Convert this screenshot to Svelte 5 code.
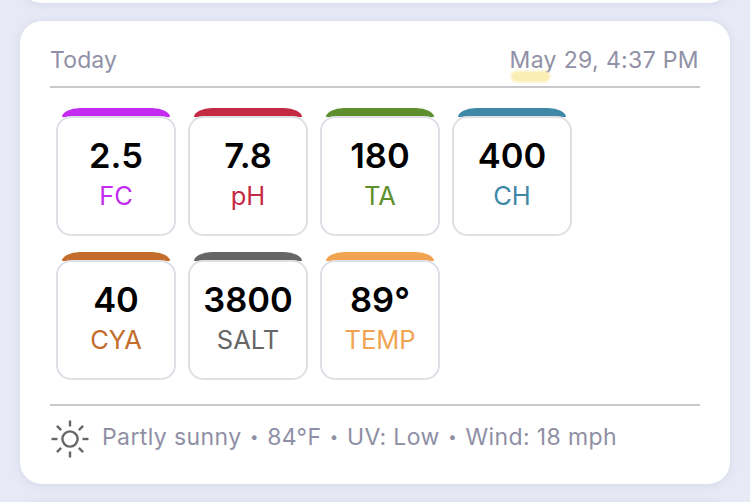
<script>
  const readings = [
    { value: '2.5', label: 'FC', color: '#c42bf0' },
    { value: '7.8', label: 'pH', color: '#c52a45' },
    { value: '180', label: 'TA', color: '#5e8f2d' },
    { value: '400', label: 'CH', color: '#3f88a8' },
    { value: '40', label: 'CYA', color: '#c46c2b' },
    { value: '3800', label: 'SALT', color: '#666666' },
    { value: '89°', label: 'TEMP', color: '#f0a452' }
  ];

  const conditions = ['Partly sunny', '84°F', 'UV: Low', 'Wind: 18 mph'];
  const rays = [0, 45, 90, 135, 180, 225, 270, 315];
</script>

<div class="page">
  <div class="card prev"></div>

  <section class="card today">
    <header class="head">
      <span class="title">Today</span>
      <span class="date"><span class="mark"></span>May 29, 4:37 PM</span>
    </header>

    <div class="tiles">
      {#each readings as r}
        <div class="tile">
          <div class="cap" style="background: {r.color}"></div>
          <div class="body">
            <div class="value">{r.value}</div>
            <div class="label" style="color: {r.color}">{r.label}</div>
          </div>
        </div>
      {/each}
    </div>

    <footer class="foot">
      <svg class="sun" viewBox="0 0 40 40" width="40" height="40" aria-hidden="true">
        <circle cx="20" cy="20" r="7.6" />
        {#each rays as a}
          <line x1="20" y1="1.5" x2="20" y2="7.5" transform="rotate({a} 20 20)" />
        {/each}
      </svg>
      <span class="conditions">
        {#each conditions as c, i}
          {#if i > 0}<span class="dot">•</span>{/if}<span>{c}</span>
        {/each}
      </span>
    </footer>
  </section>

  <div class="card next"></div>
</div>

<style>
  :global(body) {
    margin: 0;
    background: #e7e9f5;
    overflow: hidden;
  }

  .page {
    width: 750px;
    height: 502px;
    overflow: hidden;
    padding: 0 20px;
    box-sizing: border-box;
    font-family: Inter, "Liberation Sans", sans-serif;
  }

  .card {
    background: #fff;
    border-radius: 22px;
    box-shadow: 0 1px 8px rgba(150, 155, 190, 0.22);
  }

  .prev {
    height: 43px;
    margin-top: -40px;
  }

  .today {
    margin-top: 18px;
    height: 463px;
    box-sizing: border-box;
    padding: 21px 30px 0;
  }

  .next {
    height: 40px;
    margin-top: 18px;
  }

  .head {
    display: flex;
    justify-content: space-between;
    height: 44px;
    padding: 0 1px 0 0;
    border-bottom: 2px solid #c9c9cd;
    font-size: 23px;
    line-height: 36px;
    color: #9090a6;
  }

  .title {
    letter-spacing: 0.15px;
  }

  .date {
    position: relative;
    letter-spacing: 0.35px;
  }

  .mark {
    position: absolute;
    left: 1px;
    top: 29px;
    width: 39px;
    height: 11px;
    border-radius: 5px;
    background: #fbeeb4;
    filter: blur(1px);
  }

  .tiles {
    display: grid;
    grid-template-columns: repeat(4, 120px);
    column-gap: 12px;
    row-gap: 16px;
    margin: 20px 0 0 6px;
  }

  .tile {
    height: 128px;
  }

  .cap {
    height: 9px;
    margin: 0 6px -1px;
    border-radius: 18px 18px 0 0 / 9px 9px 0 0;
  }

  .body {
    position: relative;
    height: 120px;
    box-sizing: border-box;
    border: 2px solid #dfdfe6;
    border-radius: 15px;
    background: #fff;
    text-align: center;
    padding-top: 17px;
  }

  .value {
    font-size: 34.5px;
    font-weight: 600;
    line-height: 41px;
    color: #000;
  }

  .label {
    font-size: 25.5px;
    line-height: 36px;
    margin-top: 2px;
  }

  .foot {
    display: flex;
    align-items: center;
    gap: 12px;
    margin-top: 24px;
    padding-top: 3px;
    border-top: 2px solid #c9c9cd;
    height: 60px;
    font-size: 23px;
    color: #8f8fa5;
  }

  .conditions {
    display: flex;
    letter-spacing: 0.4px;
    padding-bottom: 4px;
  }

  .dot {
    font-size: 15px;
    line-height: 28px;
    margin: 0 8.4px;
  }

  .sun {
    flex: none;
  }

  .sun circle,
  .sun line {
    fill: none;
    stroke: #666;
    stroke-width: 2.4;
  }
</style>
